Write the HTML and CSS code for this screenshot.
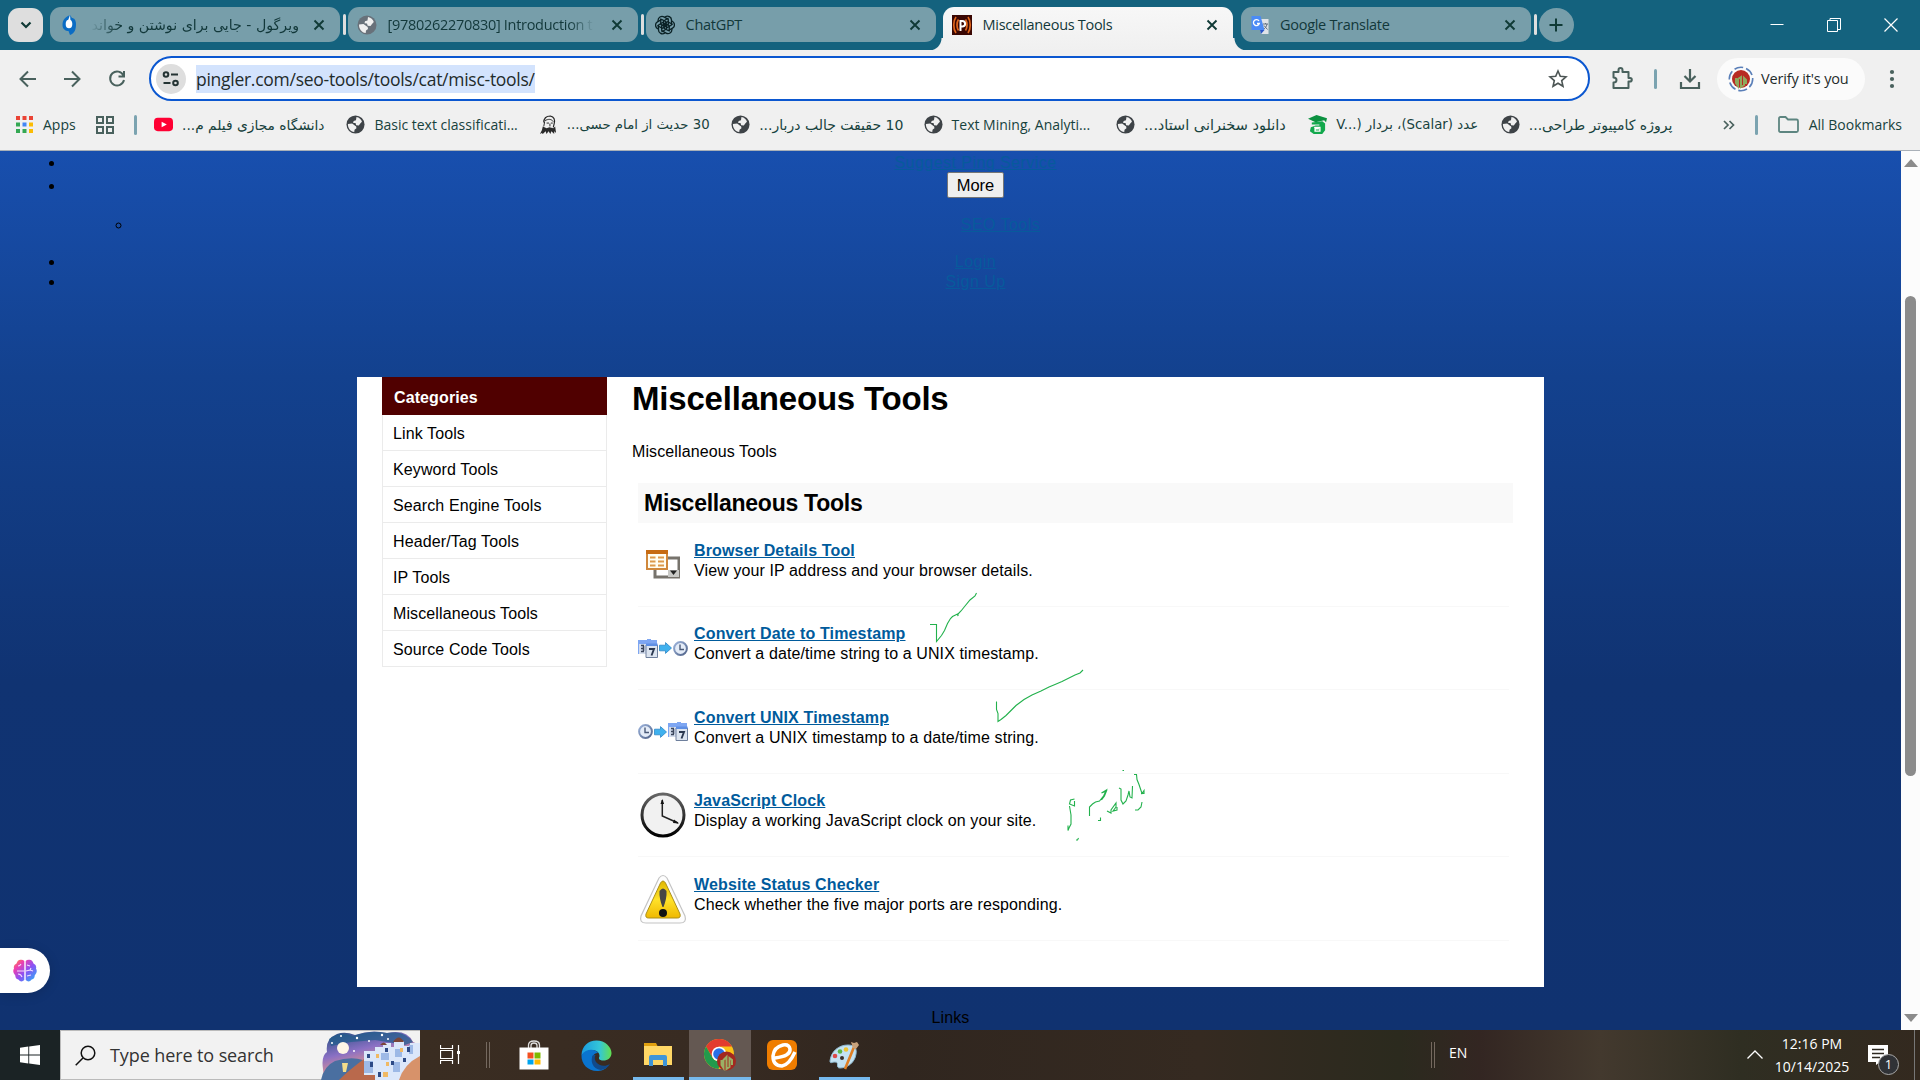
FILE: index.html
```html
<!DOCTYPE html>
<html lang="en">
<head>
    <meta charset="UTF-8">
    <meta name="viewport" content="width=device-width, initial-scale=1.0">
    <title>Miscellaneous Tools</title>
    <link rel="stylesheet" href="styles.css">
</head>
<body>

    <!-- Shared icons -->
    <svg class="defs" width="0" height="0">
        <defs>
            <linearGradient id="face" x2="1" y2="1"><stop stop-color="#9db4dc"/><stop offset="1" stop-color="#4f6288"/></linearGradient>
            <symbol id="globe" viewBox="0 0 20 20">
                <circle cx="10" cy="10" r="9.5" fill="currentColor"/>
                <path d="M11 2c3 .5 5 2.500 5.800 5l-1.800 2-1.500 2-2.800-.3-.7-2.200-2.500-.2.500-2.100 2.500-.6z" fill="#f0f0f0"/>
                <path d="M2 9.500l4.500-.5 2.400 1.800 1.800 1.200.3 2-2 1.500-.3 2.500c-4-.4-6.800-4-6.700-8.500z" fill="#f0f0f0"/>
            </symbol>
            <symbol id="close" viewBox="0 0 12 12">
                <path d="M1.500 1.500l9 9M10.500 1.500l-9 9" fill="none" stroke="#103a36" stroke-width="1.900"/>
            </symbol>
            <symbol id="calendar" viewBox="0 0 20 19">
                <path d="M0 1h9V0h4v1h6v14H0z" fill="#7ea6f2"/>
                <path d="M1 5h9v10H1z" fill="#d3dcec"/>
                <path d="M3 6.500h3M3 9.500h3M3 12.500h3M5.500 7v5" stroke="#3b465c" stroke-width="1.500"/>
                <path d="M8 6h11.500v12.500H8z" fill="#dce4f0" stroke="#6e7f9c"/>
                <path d="M8 4.500h11.500V7H8z" fill="#5f8fe4"/>
                <path d="M11 10h5l-2.500 6.500" fill="none" stroke="#2b3850" stroke-width="1.900"/>
            </symbol>
            <symbol id="arrow" viewBox="0 0 13 12">
                <path d="M.5 3.200h6V.6L12.500 6l-6 5.400V8.800h-6z" fill="#3fb1ee" stroke="#2f86c6" stroke-width=".8"/>
            </symbol>
            <symbol id="miniclock" viewBox="0 0 15 15">
                <circle cx="7.500" cy="7.500" r="6.400" fill="#e4ecf8" stroke="url(#face)" stroke-width="2"/>
                <path d="M7 3.500V8.500h4" fill="none" stroke="#4a5a78" stroke-width="1.400"/>
            </symbol>
        </defs>
    </svg>

    <!-- Tab strip -->
    <div class="tab-strip">
        <div class="tab-search">
            <svg width="12" height="8" viewBox="0 0 12 8"><path d="M1.500 1.500L6 6l4.500-4.500" fill="none" stroke="#103a36" stroke-width="2.200"/></svg>
        </div>
        <div class="tab">
            <svg class="tab-icon" viewBox="0 0 20 20"><path d="M11 0C7 2 3.500 4 3.500 10c0 4 3 6 6 6l1.500 4c5-2 6-6 6-11 0-4-2-6-4-6z" fill="#0a6cc4"/><ellipse cx="10" cy="9" rx="3.300" ry="4.300" fill="#fff"/><path d="M11 0l.5 6-3 1z" fill="#fff"/></svg>
            <span class="tab-title fa" dir="rtl"><bdi class="fa-text t-virgool">ویرگول - جایی برای نوشتن و خواند</bdi></span>
            <svg class="tab-close"><use href="#close"/></svg>
        </div>
        <i class="tab-sep"></i>
        <div class="tab">
            <svg class="tab-icon grey"><use href="#globe"/></svg>
            <span class="tab-title fade">[9780262270830] Introduction t</span>
            <svg class="tab-close"><use href="#close"/></svg>
        </div>
        <i class="tab-sep"></i>
        <div class="tab">
            <svg class="tab-icon" viewBox="0 0 20 20"><g fill="none" stroke="#0b2226" stroke-width="1.300"><path id="petal" d="M10 2c3-2 6.500 0 6.500 3v5l-4 2.500-4-2.300V6l5-3"/><use href="#petal" transform="rotate(60 10 10)"/><use href="#petal" transform="rotate(120 10 10)"/><use href="#petal" transform="rotate(180 10 10)"/><use href="#petal" transform="rotate(240 10 10)"/><use href="#petal" transform="rotate(300 10 10)"/></g></svg>
            <span class="tab-title">ChatGPT</span>
            <svg class="tab-close"><use href="#close"/></svg>
        </div>
        <div class="tab tab-active">
            <svg class="tab-icon" viewBox="0 0 20 20"><path d="M0 0h20v20H0z" fill="#3a0703"/><g fill="none" stroke="#e0661c" stroke-width="1.700"><path d="M4 2C1 6 1 14 4 18M16 2c3 4 3 12 0 16M6.500 4.500c-2 3-2 8 0 11M13.500 4.500c2 3 2 8 0 11"/></g><path d="M8.500 16V6h1.800a2.600 2.600 0 0 1 0 5.600H8.500" fill="none" stroke="#fff" stroke-width="2"/></svg>
            <span class="tab-title">Miscellaneous Tools</span>
            <svg class="tab-close"><use href="#close"/></svg>
        </div>
        <div class="tab">
            <svg class="tab-icon" viewBox="0 0 20 20"><path d="M8 4h10.500v15H11z" fill="#dfe3e8"/><path d="M1.500 1h9l4 14h-13z" fill="#4b8bf5"/><path d="M10 15h4.500L11 19z" fill="#2a56c6"/><path d="M9 6a3 3 0 1 0 .3 2.500H7" fill="none" stroke="#fff" stroke-width="1.300"/><path d="M13 9h5M15.500 8v1M17 9c-.5 3-2 4-3 5M14 10.500l3.500 4" fill="none" stroke="#607080"/></svg>
            <span class="tab-title">Google Translate</span>
            <svg class="tab-close"><use href="#close"/></svg>
        </div>
        <i class="tab-sep"></i>
        <div class="new-tab">
            <svg width="14" height="14" viewBox="0 0 14 14"><path d="M7 .5v13M.5 7h13" stroke="#103a36" stroke-width="2"/></svg>
        </div>
        <div class="window-controls">
            <svg width="14" height="14" viewBox="0 0 14 14"><path d="M.5 6.500h13" stroke="#fff"/></svg>
            <svg width="14" height="14" viewBox="0 0 14 14"><path d="M.5 2.500h10v11H.5zM3 2.500v-2h10.500v11h-3" fill="none" stroke="#fff"/></svg>
            <svg width="14" height="14" viewBox="0 0 14 14"><path d="M.5.5l13 13M13.500.5l-13 13" stroke="#fff" stroke-width="1.200"/></svg>
        </div>
    </div>

    <!-- Address bar -->
    <div class="toolbar">
        <svg class="nav-icon" viewBox="0 0 20 20"><path d="M18 10H3M10 2.500L2.500 10l7.500 7.500"/></svg>
        <svg class="nav-icon" viewBox="0 0 20 20"><path d="M2 10h15M10 2.500l7.500 7.500-7.500 7.500"/></svg>
        <svg class="nav-icon reload" viewBox="0 0 20 20"><path d="M16.500 6.500A7 7 0 1 0 17 11M17 2v5.500h-5.500"/></svg>
        <div class="omnibox">
            <div class="site-info">
                <svg width="18" height="16" viewBox="0 0 18 16"><g fill="none" stroke="#243333" stroke-width="2"><circle cx="4" cy="3.500" r="2.300"/><circle cx="13.500" cy="12" r="2.300"/><path d="M9 3.500h7M1.500 12h7"/></g></svg>
            </div>
            <span class="url">pingler.com/seo-tools/tools/cat/misc-tools/</span>
            <svg class="star" width="20" height="20" viewBox="0 0 20 20"><path d="M10 2l2.300 5.300 5.700.5-4.300 3.800 1.300 5.700-5-3-5 3 1.300-5.700L2 7.800l5.700-.5z" fill="none" stroke="#4c5554" stroke-width="1.600"/></svg>
        </div>
        <svg class="puzzle" width="24" height="24" viewBox="0 0 24 24"><path d="M3.500 5h5V3a2 2 0 0 1 4 0v2h6v6h1.500a1.800 1.800 0 0 1 0 3.600h-1.500V21h-15v-5.500c4 0 4-5 0-5z" fill="none" stroke="#49615d" stroke-width="2" stroke-linejoin="round"/></svg>
        <i class="bar-sep"></i>
        <svg class="download" width="22" height="22" viewBox="0 0 22 22"><path d="M11 1v12M5.500 8l5.500 5.500L16.500 8M2 14v6h18v-6" fill="none" stroke="#49615d" stroke-width="2.200"/></svg>
        <div class="profile">
            <svg width="26" height="26" viewBox="0 0 26 26"><circle cx="13" cy="13" r="11.700" fill="none" stroke="#5a7fb8" stroke-width="1.600" stroke-dasharray="9 3"/><circle cx="13" cy="13" r="9" fill="#b82a22"/><path d="M8 12v5l2 3v-7l3-2v10l3-2v-7l2 2v4" fill="none" stroke="#8fa85c" stroke-width="2"/></svg>
            <span>Verify it's you</span>
        </div>
        <svg class="dots" width="6" height="20" viewBox="0 0 6 20"><g fill="#49615d"><circle cx="3" cy="3" r="2.100"/><circle cx="3" cy="10" r="2.100"/><circle cx="3" cy="17" r="2.100"/></g></svg>
    </div>

    <!-- Bookmarks -->
    <div class="bookmarks">
        <svg width="17" height="17" viewBox="0 0 17 17"><path d="M0 0h4v4H0zM6.500 0h4v4h-4zM13 0h4v4h-4z" fill="#ea4335"/><path d="M0 6.500h4v4H0zM0 13h4v4H0zM6.500 13h4v4h-4z" fill="#34a853"/><path d="M6.500 6.500h4v4h-4z" fill="#4285f4"/><path d="M13 6.500h4v4h-4zM13 13h4v4h-4z" fill="#fbbc04"/></svg>
        <span class="apps-label">Apps</span>
        <svg width="18" height="18" viewBox="0 0 18 18"><path d="M1 1h6v6H1zM11 1h6v6h-6zM1 11h6v6H1zM11 11h6v6h-6z" fill="none" stroke="#49615d" stroke-width="2"/></svg>
        <i class="bar-sep"></i>
        <div class="bookmark">
            <svg viewBox="0 0 20 20"><rect y="3" width="20" height="14" rx="4" fill="#ff0033"/><path d="M8 7l5.500 3L8 13z" fill="#fff"/></svg>
            <bdi class="fa-text b1" dir="rtl">دانشگاه مجازی فیلم م...</bdi>
        </div>
        <div class="bookmark">
            <svg><use href="#globe"/></svg>
            <span>Basic text classificati...</span>
        </div>
        <div class="bookmark">
            <svg viewBox="0 0 20 20"><path d="M5 8c0-5 3-7 7-7 4 1 5 4 4 8l-1 4" fill="none" stroke="#222" stroke-width="1.200"/><path d="M6 6c4-2 7-2 9 1M6 7l-1 5M8 8.500h2.500M12.500 8.500h2M11.500 9v3" fill="none" stroke="#222"/><path d="M4 12l4 2 3-1 4 1 2-2 1 7-2-2v3l-3-3-1 3-2-3-2 3-1-3-3 3-1-1-2 1 2-4z" fill="#2b2b2b"/></svg>
            <bdi class="fa-text b2" dir="rtl">30 حدیث از امام حسی...</bdi>
        </div>
        <div class="bookmark">
            <svg><use href="#globe"/></svg>
            <bdi class="fa-text b3" dir="rtl">10 حقیقت جالب دربار...</bdi>
        </div>
        <div class="bookmark">
            <svg><use href="#globe"/></svg>
            <span>Text Mining, Analyti...</span>
        </div>
        <div class="bookmark">
            <svg><use href="#globe"/></svg>
            <bdi class="fa-text b4" dir="rtl">دانلود سخنرانی استاد...</bdi>
        </div>
        <div class="bookmark">
            <svg viewBox="0 0 20 20"><path d="M0 4l9-4 11 3.500-1 4-2-2-9 2z" fill="#0b9140"/><path d="M4 8l11-1.500L18 9v7l-3 4H6l-4-3 1-4 5-2h4V10H4z" fill="#12a84c"/><path d="M6.500 13h6v4h-5v-2.500h4" fill="none" stroke="#fff" stroke-width="1.500"/></svg>
            <bdi class="fa-text b5" dir="rtl">عدد (Scalar)، بردار (V...&lrm;</bdi>
        </div>
        <div class="bookmark">
            <svg><use href="#globe"/></svg>
            <bdi class="fa-text b6" dir="rtl">پروژه کامپیوتر طراحی...</bdi>
        </div>
        <div class="bookmarks-end">
            <svg width="12" height="10" viewBox="0 0 12 10"><path d="M1 1l4 4-4 4M6.500 1l4 4-4 4" fill="none" stroke="#49615d" stroke-width="1.700"/></svg>
            <i class="bar-sep"></i>
            <svg width="21" height="17" viewBox="0 0 21 17"><path d="M1 2.500Q1 1 2.500 1H7.500l2.500 2.500h8.500Q20 3.500 20 5v9.500Q20 16 18.500 16h-16Q1 16 1 14.500z" fill="none" stroke="#5d8580" stroke-width="1.800"/></svg>
            <span>All Bookmarks</span>
        </div>
    </div>

    <!-- Web page -->
    <div class="viewport">
        <div class="page">
            <ul class="top-nav">
                <li><a href="#">Suggest Ping Service</a></li>
                <li><button class="more">More</button>
                    <ul><li><a href="#">SEO Tools</a></li></ul>
                </li>
                <li><a href="#">Login</a></li>
                <li><a href="#">Sign Up</a></li>
            </ul>

            <div class="content">
                <div class="sidebar">
                    <h3>Categories</h3>
                    <ul>
                        <li>Link Tools</li>
                        <li>Keyword Tools</li>
                        <li>Search Engine Tools</li>
                        <li>Header/Tag Tools</li>
                        <li>IP Tools</li>
                        <li>Miscellaneous Tools</li>
                        <li>Source Code Tools</li>
                    </ul>
                </div>
                <div class="main">
                    <h1>Miscellaneous Tools</h1>
                    <p class="intro">Miscellaneous Tools</p>
                    <h2>Miscellaneous Tools</h2>
                    <div class="tool">
                        <div class="tool-icon">
                            <svg width="34" height="29" viewBox="0 0 34 29"><path d="M9 8h24v19H9z" fill="#fff" stroke="#77736c" stroke-width="3"/><path d="M22 20h11v7H22z" fill="#c9c9c6"/><path d="M24 20.500h7L27.500 25z" fill="#222"/><path d="M1 1h20v18H1z" fill="#fffdf2" stroke="#d0883c" stroke-width="2"/><path d="M0 0h22v4H0z" fill="#c76b12"/><path d="M4 7.500h5.500M12 7.500h6M4 11.500h5.500M12 11.500h6M4 15.500h5.500M12 15.500h6" stroke="#dd9a4a" stroke-width="2"/></svg>
                        </div>
                        <div class="tool-text"><a href="#">Browser Details Tool</a><br>View your IP address and your browser details.</div>
                    </div>
                    <div class="tool">
                        <div class="tool-icon">
                            <svg width="20" height="19"><use href="#calendar"/></svg>
                            <svg width="13" height="12"><use href="#arrow"/></svg>
                            <svg width="15" height="15"><use href="#miniclock"/></svg>
                        </div>
                        <div class="tool-text"><a href="#">Convert Date to Timestamp</a><br>Convert a date/time string to a UNIX timestamp.</div>
                    </div>
                    <div class="tool">
                        <div class="tool-icon">
                            <svg width="15" height="15"><use href="#miniclock"/></svg>
                            <svg width="13" height="12"><use href="#arrow"/></svg>
                            <svg width="20" height="19"><use href="#calendar"/></svg>
                        </div>
                        <div class="tool-text"><a href="#">Convert UNIX Timestamp</a><br>Convert a UNIX timestamp to a date/time string.</div>
                    </div>
                    <div class="tool">
                        <div class="tool-icon">
                            <svg width="46" height="46" viewBox="0 0 46 46">
                                <defs><linearGradient id="rim" x2="0" y2="1"><stop stop-color="#666"/><stop offset="1" stop-color="#000"/></linearGradient></defs>
                                <circle cx="23" cy="23" r="21" fill="#f1f1f1" stroke="url(#rim)" stroke-width="3"/>
                                <path d="M22.300 8v16L38 31" fill="none" stroke="#222" stroke-width="1.500"/>
                                <path d="M20.500 12l1.800-5 1.800 5zM34 27.500l5 4-6-.5z" fill="#111"/>
                            </svg>
                        </div>
                        <div class="tool-text"><a href="#">JavaScript Clock</a><br>Display a working JavaScript clock on your site.</div>
                    </div>
                    <div class="tool">
                        <div class="tool-icon">
                            <svg width="48" height="50" viewBox="0 0 48 50">
                                <defs><linearGradient id="warn" x2="0" y2="1"><stop stop-color="#e0b700"/><stop offset=".5" stop-color="#ffe22a"/><stop offset="1" stop-color="#efb800"/></linearGradient></defs>
                                <path d="M20 4Q24-1 28 4L46 42Q48 49 41 49H7Q0 49 2 42z" fill="#fdfdfd" stroke="#c4c4c4" stroke-width="1.200"/>
                                <path d="M21.500 9Q24 5 26.500 9L41 40Q42 44 38.500 44h-29Q6 44 7 40z" fill="url(#warn)" stroke="#ad9018"/>
                                <path d="M20.500 17Q24 12 27.500 17Q28 24 24.500 33h-1Q20 24 20.500 17z" fill="#454545"/>
                                <circle cx="24" cy="39" r="4" fill="#111"/>
                            </svg>
                        </div>
                        <div class="tool-text"><a href="#">Website Status Checker</a><br>Check whether the five major ports are responding.</div>
                    </div>
                </div>

                <!-- Pen marks drawn over the list -->
                <svg class="ink" width="230" height="260" viewBox="925 588 230 260">
                    <path d="M930 624.500h6.500v17l5-6 3-5 3-7 3-5 2-2 5-2.500.5 2v-2l3-3 4-5 5-6 5-4 1.500-3"/>
                    <path d="M996.500 701.500v8l1.500 4v8l3-2 5-4 5-5 5-5 8-6 8-4.500 9-4 8-4 6-2.500 7-3 8-4 5-2.500 5-2 3-3"/>
                    <path d="M1074.500 801v5l-5-2 1-4 4-1M1069.500 806l1.500 9v9l-2 4-1 2.500v-5M1076 840h1.500l1-2"/>
                    <path d="M1089.500 816v-9l3-3 3-2 4-1 4-5 3-6-5 3 5-2-2 5-3 4"/>
                    <path d="M1107 811l4 2v-3l5-7v4l-3 4 4-1v-3M1098 820.500h2.500v-3"/>
                    <path d="M1119 788l2 1v11l2 4 3-3 2-6 1-4 1 6 2 1 .5-12M1122.500 770.500h1.500"/>
                    <path d="M1134 774.500h2.500l.5 5 2 5 1 3 2 6 2-3v3h-3M1142 802l-1 5-3 3h-3"/>
                </svg>
            </div>

            <div class="footer-links">Links</div>

            <div class="side-widget">
                <svg width="24" height="23" viewBox="0 0 24 23">
                    <defs><linearGradient id="brain" x2="1" y2="1"><stop stop-color="#ff9a2b"/><stop offset=".25" stop-color="#ef3fae"/><stop offset=".55" stop-color="#8a52f5"/><stop offset="1" stop-color="#22b8f5"/></linearGradient></defs>
                    <path d="M11.300 2v19q-3 3-6-.5-3-.5-3-4Q-1 13 1 9.500q-1-3.500 2.500-5Q4.500 1 7.500.800 10 .5 11.300 2zM12.700 2v19q3 3 6-.5 3-.5 3-4Q25 13 23 9.500q1-3.500-2.500-5Q19.500 1 16.500.800 14 .5 12.700 2z" fill="url(#brain)"/>
                    <path d="M11 12H4M8 5q-1 2-3 2M5 15q3 0 4 3M13 12l4-1 1-2m-1 2l3 1M14 6l3 1M18 16l-4 1" fill="none" stroke="#f3dcff" stroke-width="1.100"/>
                </svg>
            </div>
        </div>
        <div class="scrollbar">
            <svg width="14" height="8" viewBox="0 0 14 8"><path d="M7 0l7 8H0z" fill="#8b8b8b"/></svg>
            <div class="thumb"></div>
            <svg width="14" height="8" viewBox="0 0 14 8"><path d="M0 0h14L7 8z" fill="#8b8b8b"/></svg>
        </div>
    </div>

    <!-- Taskbar -->
    <div class="taskbar">
        <div class="start">
            <svg width="20" height="20" viewBox="0 0 20 20"><path d="M0 2.700L8.300 1.500v8H0zM9.200 1.400L20 0v9.500H9.200zM0 10.400h8.300v8L0 17.200zM9.200 10.400H20V20L9.200 18.500z" fill="#fff"/></svg>
        </div>
        <div class="search">
            <svg class="lens" width="21" height="21" viewBox="0 0 21 21"><circle cx="13" cy="8" r="6.800" fill="none" stroke="#111" stroke-width="1.500"/><path d="M8 13L.700 20.300" stroke="#111" stroke-width="1.500"/></svg>
            <span>Type here to search</span>
            <svg class="scene" width="99" height="49" viewBox="0 0 99 49">
                <defs><linearGradient id="dusk" x2=".5" y2="1"><stop stop-color="#174a78"/><stop offset=".45" stop-color="#8a70c4"/><stop offset=".8" stop-color="#f09a86"/></linearGradient></defs>
                <path d="M2 38Q0 25 6 21 4 8 16 3q8-3 18 1Q50-2 66 2q20-4 26 9l7 3v35H3z" fill="url(#dusk)"/>
                <path d="M8 8q12-8 24-3Q50-1 66 2q18-3 26 9l-8 3-30-5-24 2-20 4z" fill="#1f5c8a" opacity=".7"/>
                <circle cx="22" cy="17" r="6" fill="#fff6e6"/>
                <g fill="#fff"><circle cx="20" cy="5" r="1"/><circle cx="36" cy="7" r="1.200"/><circle cx="48" cy="10" r="1"/><circle cx="61" cy="4" r="1.200"/><circle cx="67" cy="8" r="1"/><circle cx="11" cy="12" r="1"/><circle cx="33" cy="20" r="1"/></g>
                <path d="M0 49q3-14 14-19 16-5 28-1L26 49z" fill="#4a6fa0"/>
                <path d="M21 32h6l-2 9h-3z" fill="#f3dd8a"/>
                <path d="M18 49q10-10 25-21l16 10 40-12v23z" fill="#b9694c"/>
                <path d="M43 20h11v-4h8v-4h8v4h3v-6h10v5h6v-3h10v24l-15 9v6H54v-7H43z" fill="#dbe7fa"/>
                <path d="M72 11q6-9 11 0zM59 14q4-5 7 0z" fill="#7a4538"/>
                <path d="M43 30h9v12h-9zM60 22h8v7h-8zM74 18h7v8h-7zM72 31h7v10h-7zM88 14h4v9h-4z" fill="#9db9e6"/>
                <g fill="#2d4a86"><path d="M46 23h3v4h-3zM49 31h3v5h-3zM64 17h3v4h-3zM70 30h3v4h-3zM57 41h3v5h-3zM86 16h3v5h-3zM82 27h3v4h-3z"/></g>
                <g fill="#f0b964"><path d="M55 23h3v4h-3zM65 31h3v4h-3zM62 41h5v5h-5zM79 17h3v4h-3z"/></g>
                <path d="M78 49q5-16 21-24v24z" fill="#d7926a"/>
            </svg>
        </div>
        <div class="task-view">
            <svg width="20" height="19" viewBox="0 0 20 19"><path d="M.5 0v3.500h12V0M.5 19v-3.500h12V19M.5 5.500h12v8H.5zM18.500 0v6M18.500 9v10" fill="none" stroke="#fff" stroke-width="1.200"/><path d="M17 6h3v3h-3z" fill="#fff"/></svg>
        </div>
        <i class="grip"></i>
        <div class="apps">
            <div class="app">
                <svg width="30" height="30" viewBox="0 0 30 30"><path d="M9.500 8V5q0-4 5.500-4t5.500 4v3M12 8V5.500Q12 3 15 3t3 2.500V8" fill="none" stroke="#ddd" stroke-width="1.300"/><path d="M.5 7.500h29v22h-29z" fill="#fff"/><path d="M8.500 12.500h6v6h-6z" fill="#f25022"/><path d="M15.500 12.500h6v6h-6z" fill="#7fba00"/><path d="M8.500 19.500h6v5h-6z" fill="#00a4ef"/><path d="M15.500 19.500h6v5h-6z" fill="#ffb900"/></svg>
            </div>
            <div class="app">
                <svg width="31" height="31" viewBox="0 0 31 31">
                    <defs><linearGradient id="edge"><stop stop-color="#1a9be0"/><stop offset=".6" stop-color="#34c6d8"/><stop offset="1" stop-color="#63e04e"/></linearGradient></defs>
                    <path d="M.5 15C1 6 7 .5 15.500.5 24 .5 30.500 7 30.500 13c0 5-4 7.500-8 7.500-5 0-5-2.500-4-4C19 10 10 7 .5 15z" fill="url(#edge)"/>
                    <path d="M.5 15C4 9 14 8 17 13c-6 0-8 7-3 12 4 4 10 4 13 1-3 4-7 5-11 5C7 31 0 24 .5 15z" fill="#0a74cf"/>
                    <path d="M12 15c-3 5-1 14 8 15 4-.5 7-3 9-6-5 3-11 2-14-2-1-2-2-4-.5-7z" fill="#114a8b"/>
                </svg>
            </div>
            <div class="app open">
                <svg width="28" height="24" viewBox="0 0 28 24"><path d="M0 0h12l1.500 3H0z" fill="#e0a010"/><path d="M0 3h28v19H0z" fill="#ffd766"/><path d="M5 23V14q0-2 2-2h14q2 0 2 2v9h-4v-6H9v6z" fill="#3f95d8"/></svg>
            </div>
            <div class="app open current">
                <svg width="32" height="32" viewBox="0 0 32 32"><circle cx="15" cy="15" r="15" fill="#fbc116"/><path d="M2 7.500A15 15 0 0 1 28 7.500H15L8.500 18.700z" fill="#e33b2e"/><path d="M2 7.500L8.500 18.700q3 4 8 3.500L14.500 30A15 15 0 0 1 2 7.500z" fill="#229a4c"/><circle cx="15" cy="15" r="7.300" fill="#fff"/><circle cx="15" cy="15" r="5.800" fill="#2a6fe8"/><circle cx="22.500" cy="22" r="9.500" fill="#a3281f"/><path d="M17.500 21v5l2 3v-8l3-3v12l3-2v-9l2.500 2v5" fill="none" stroke="#9ab066" stroke-width="2"/></svg>
            </div>
            <div class="app">
                <svg width="30" height="30" viewBox="0 0 30 30"><rect width="30" height="30" rx="6" fill="#ef7d00"/><path d="M8 18q16-2 15-9-1-5-7-4-9 2-10 11 0 10 9 10 7-1 13-14" fill="none" stroke="#fff" stroke-width="3.500"/></svg>
            </div>
            <div class="app open">
                <svg width="31" height="29" viewBox="0 0 31 29"><path d="M1 20C2 10 10 4 19 4c7 0 9 4 8 9-1 8-8 14-16 14-5 0 0-6-5-6-3 0-5 2-5-1z" fill="#c3e2f2" stroke="#8fb9d0"/><circle cx="6" cy="15" r="2.300" fill="#dc4a4a"/><circle cx="11" cy="10.500" r="2.300" fill="#5db545"/><circle cx="17" cy="8.500" r="2.300" fill="#eec232"/><circle cx="13" cy="17" r="2" fill="#3b2f28"/><path d="M16 28L25 6" stroke="#e07f24" stroke-width="2.600"/><path d="M24 7l-2-6 3 1 3-1 2 3-3 4z" fill="#c7a27c"/></svg>
            </div>
        </div>
        <div class="tray">
            <i class="grip"></i>
            <span class="lang">EN</span>
            <svg class="chevron" width="16" height="9" viewBox="0 0 16 9"><path d="M.5 8.500L8 1l7.500 7.500" fill="none" stroke="#fff" stroke-width="1.300"/></svg>
            <div class="clock">12:16 PM<br>10/14/2025</div>
            <div class="notice">
                <svg width="20" height="20" viewBox="0 0 20 20"><path d="M0 0h20v17h-8l-4 3v-3H0z" fill="#fff"/><path d="M4 4.500h12M4 8.500h12M4 12.500h8" stroke="#2d2820" stroke-width="1.400"/></svg>
                <span class="badge">1</span>
            </div>
            <i class="show-desktop"></i>
        </div>
    </div>

</body>
</html>
```
FILE: styles.css
```css
/* Reset */
*, *::before, *::after {
    box-sizing: border-box;
    margin: 0;
    padding: 0;
}

body {
    width: 1920px;
    height: 1080px;
    overflow: hidden;
    display: flex;
    flex-direction: column;
    font-family: "Open Sans", "DejaVu Sans", sans-serif;
    font-size: 14px;
    color: #17423d;
    background: #f0f0f0;
}

svg {
    display: block;
    flex: none;
}

i {
    flex: none;
}

.defs {
    position: absolute;
}

/* Tab strip */
.tab-strip {
    height: 50px;
    padding: 7px 0 0 8px;
    display: flex;
    align-items: flex-start;
    background: #14627e;
}

.tab-search {
    width: 35px;
    height: 34px;
    margin: 1px 7px 0 0;
    border-radius: 11px;
    background: #dedede;
    display: flex;
    align-items: center;
    justify-content: center;
}

.tab {
    position: relative;
    flex: none;
    width: 290px;
    height: 35px;
    padding: 0 15px 0 9px;
    border-radius: 11px;
    background: #779eaa;
    display: flex;
    align-items: center;
    color: #12383a;
}

.tab-icon {
    width: 20px;
    height: 20px;
}

.grey {
    color: #68717a;
}

.tab-title {
    flex: 1;
    margin: 0 17px 0 10.6px;
    overflow: hidden;
    white-space: nowrap;
    font-size: 14.5px;
    letter-spacing: -0.3px;
}

.fade {
    mask-image: linear-gradient(90deg, #000 88%, transparent 100%);
}

.tab-close {
    width: 12px;
    height: 12px;
}

.tab-sep {
    width: 3px;
    height: 21px;
    margin: 7px 2px 0 3px;
    border-radius: 2px;
    background: #dedede;
}

.tab-active {
    height: 43px;
    margin: 0 7.5px 0 7px;
    padding-bottom: 8px;
    border-radius: 11px 11px 0 0;
    background: linear-gradient(#f7f7f7, #f0f0f0);
}

/* Curved feet of the active tab */
.tab-active::before,
.tab-active::after {
    content: "";
    position: absolute;
    bottom: 0;
    width: 14px;
    height: 12px;
}

.tab-active::before {
    left: -14px;
    background: radial-gradient(circle at 0 0, transparent 12px, #f0f0f0 13px);
}

.tab-active::after {
    right: -14px;
    background: radial-gradient(circle at 100% 0, transparent 12px, #f0f0f0 13px);
}

.new-tab {
    width: 35px;
    height: 34px;
    margin-top: 1px;
    border-radius: 50%;
    background: #779eaa;
    display: flex;
    align-items: center;
    justify-content: center;
}

.window-controls {
    margin: 11px 22px 0 auto;
    display: flex;
    gap: 43px;
}

/* Persian labels */
.fa-text {
    display: inline-block;
    font-family: "DejaVu Sans", sans-serif;
    font-size: 13.8px;
    line-height: 20px;
    letter-spacing: 0;
    white-space: nowrap;
}

.t-virgool {
    font-size: 14.2px;
}

.b2, .b5 {
    font-size: 13.3px;
}

.b3, .b6 {
    font-size: 14px;
}

.b4 {
    font-size: 14.5px;
}

.fa {
    margin-right: 14px;
    mask-image: linear-gradient(270deg, #000 86%, transparent 100%);
}

/* Address bar */
.toolbar {
    height: 57px;
    padding: 0 25px 0 18px;
    display: flex;
    align-items: center;
}

.nav-icon {
    width: 20px;
    height: 20px;
    margin-right: 24px;
    fill: none;
    stroke: #49615d;
    stroke-width: 2;
}

.reload {
    margin: 0 23px 0 1px;
}

.omnibox {
    width: 1441px;
    height: 45px;
    margin-left: -1px;
    padding: 0 20px 0 5px;
    border: 2px solid #0b57d0;
    border-radius: 23px;
    background: #fff;
    display: flex;
    align-items: center;
}

.site-info {
    width: 30px;
    height: 30px;
    margin-right: 10px;
    border-radius: 50%;
    background: #dedede;
    display: flex;
    align-items: center;
    justify-content: center;
}

.url {
    height: 28px;
    line-height: 28px;
    font-size: 17.5px;
    letter-spacing: -0.27px;
    color: #1f2b2b;
    background: #d3e3fd;
    white-space: nowrap;
}

.star {
    margin-left: auto;
}

.puzzle {
    margin-left: 20px;
}

.bar-sep {
    width: 3px;
    height: 20px;
    border-radius: 2px;
    background: #7ba3b0;
}

.toolbar .bar-sep {
    margin: 0 22px 0 20px;
}

.profile {
    width: 148px;
    height: 42px;
    margin: 0 0 0 16px;
    padding-left: 11px;
    border-radius: 21px;
    background: #fbfbfb;
    display: flex;
    align-items: center;
    gap: 7px;
    color: #1f2b2b;
    font-size: 14.5px;
    letter-spacing: -0.15px;
    white-space: nowrap;
}

.dots {
    margin-left: auto;
}

/* Bookmarks */
.bookmarks {
    height: 44px;
    padding: 0 18px 8px 16px;
    display: flex;
    align-items: center;
    border-bottom: 1px solid #a9b0b8;
    letter-spacing: 0;
}

.apps-label {
    width: 53px;
    margin-left: 10px;
}

.bookmarks > .bar-sep {
    margin: 0 17px 0 20px;
}

.bookmark {
    flex: none;
    width: 192.4px;
    display: flex;
    align-items: center;
    gap: 9px;
    white-space: nowrap;
}

.bookmark svg {
    width: 19px;
    height: 19px;
    color: #3e4347;
}

.bookmarks-end {
    margin-left: auto;
    display: flex;
    align-items: center;
    white-space: nowrap;
}

.bookmarks-end .bar-sep {
    margin: 0 20px;
}

.bookmarks-end span {
    margin-left: 10px;
}

/* Web page */
.viewport {
    height: 879px;
    display: flex;
}

.page {
    position: relative;
    width: 1901px;
    height: 879px;
    overflow: hidden;
    font-family: "Liberation Sans", Arial, sans-serif;
    font-size: 16px;
    line-height: 20px;
    letter-spacing: 0.11px;
    color: #000;
    background: linear-gradient(#184fae 0, #13418e 226px, #103372 530px, #103270 100%);
}

.page a {
    color: #005b9c;
}

.top-nav {
    height: 226px;
    padding: 2px 15px 0 65px;
    text-align: center;
    color: #000;
}

.page .top-nav a {
    color: #075a9c;
    letter-spacing: 0.45px;
}

.top-nav ul {
    padding: 17px 17px 17px 67px;
    list-style: circle;
}

.more {
    display: block;
    height: 26px;
    width: 57px;
    margin: -1px auto 0;
    border: 1px solid #767676;
    border-radius: 2px;
    background: #efefef;
    font: 16.5px "Liberation Sans", Arial, sans-serif;
    color: #000;
}

.content {
    position: relative;
    width: 1187px;
    height: 610px;
    margin-left: 357px;
    padding: 0 31px 0 25px;
    display: flex;
    background: #fff;
}

.sidebar {
    width: 225px;
    margin-right: 25px;
}

.sidebar h3 {
    height: 38px;
    padding: 2px 0 0 12px;
    line-height: 38px;
    font-size: 16px;
    color: #fff;
    background: #500000;
}

.sidebar ul {
    list-style: none;
    border: 1px solid #ebebeb;
    border-width: 0 1px;
}

.sidebar li {
    height: 36px;
    padding-left: 10px;
    line-height: 37px;
    border-bottom: 1px solid #ebebeb;
}

.main {
    flex: 1;
}

.main h1 {
    height: 65px;
    line-height: 44px;
    font-size: 33px;
    letter-spacing: -0.2px;
}

.intro {
    height: 41px;
}

.main h2 {
    height: 40px;
    margin-left: 6px;
    padding-left: 6px;
    line-height: 40px;
    font-size: 23px;
    letter-spacing: -0.25px;
    background: #f9f9f9;
}

.tool {
    height: 83.5px;
    margin: 0 4px 0 6px;
    border-bottom: 1px solid #f8f8f8;
    display: flex;
}

.tool-icon {
    width: 50px;
    height: 83px;
    margin-right: 6px;
    display: flex;
    align-items: center;
    justify-content: center;
    gap: 1px;
}

.tool-text {
    padding-top: 17.8px;
    white-space: nowrap;
}

.tool-text a {
    font-weight: bold;
    letter-spacing: 0.15px;
}

/* Pen strokes */
.ink {
    position: absolute;
    left: 568px;
    top: 211px;
    fill: none;
    stroke: #22b14c;
    stroke-width: 1.1;
}

.footer-links {
    padding-top: 21px;
    text-align: center;
}

.side-widget {
    position: absolute;
    left: 0;
    top: 797px;
    width: 50px;
    height: 45px;
    padding: 11px 0 0 13px;
    border-radius: 0 23px 23px 0;
    background: #fff;
    box-shadow: 0 2px 12px rgba(0, 0, 0, 0.15);
}

.scrollbar {
    width: 19px;
    height: 879px;
    padding: 8px 0;
    display: flex;
    flex-direction: column;
    align-items: center;
    background: #fcfcfc;
}

.thumb {
    width: 11px;
    height: 480px;
    margin: 129px 0 auto;
    border-radius: 6px;
    background: #8b8b8b;
}

/* Taskbar */
.taskbar {
    height: 50px;
    display: flex;
    align-items: stretch;
    color: #fff;
    background: linear-gradient(90deg, #1b2325 0, #1b2325 60px, #3a2d22 420px, #382b22 700px, #30261f 900px, #352a21 1200px, #2b2a1e 1400px, #332622 1480px, #43392e 1600px, #2f2e22 1740px, #33291f 100%);
}

.start {
    width: 60px;
    display: flex;
    align-items: center;
    justify-content: center;
}

.search {
    width: 360px;
    padding-left: 14px;
    display: flex;
    align-items: center;
    border: 1px solid #bbb;
    border-right: 0;
    background: #f2f2f2;
    color: #333;
    font-size: 18px;
    letter-spacing: -0.1px;
    white-space: nowrap;
}

.search span {
    margin-left: 14px;
}

.scene {
    margin-left: auto;
}

.task-view {
    padding: 15px 0 0 20px;
    width: 66px;
}

.grip {
    width: 4px;
    height: 26px;
    margin-top: 12px;
    border: 1px solid #75695f;
    border-width: 0 1px;
}

.apps {
    margin-left: 13px;
    display: flex;
}

.app {
    position: relative;
    width: 62px;
    display: flex;
    align-items: center;
    justify-content: center;
}

.open::after {
    content: "";
    position: absolute;
    left: 6px;
    right: 5px;
    bottom: 0;
    height: 3px;
    background: #76b9ed;
}

.current {
    background: #645852;
}

.current::after {
    left: 0;
    right: 0;
}

.tray {
    margin-left: auto;
    display: flex;
}

.lang {
    width: 312px;
    padding: 13px 0 0 14px;
    font-size: 14px;
}

.chevron {
    margin: 20px 10px 0 0;
}

.clock {
    width: 78px;
    padding-top: 2px;
    line-height: 23px;
    font-size: 14px;
    letter-spacing: 0;
    text-align: center;
}

.notice {
    position: relative;
    width: 63px;
    padding: 15px 0 0 17px;
}

.badge {
    position: absolute;
    left: 27px;
    top: 24px;
    width: 21px;
    height: 21px;
    border: 1px solid #a8a8a8;
    border-radius: 50%;
    background: #303236;
    font-size: 13px;
    line-height: 19px;
    text-align: center;
}

.show-desktop {
    width: 6px;
    border-left: 1px solid #777;
}
```
